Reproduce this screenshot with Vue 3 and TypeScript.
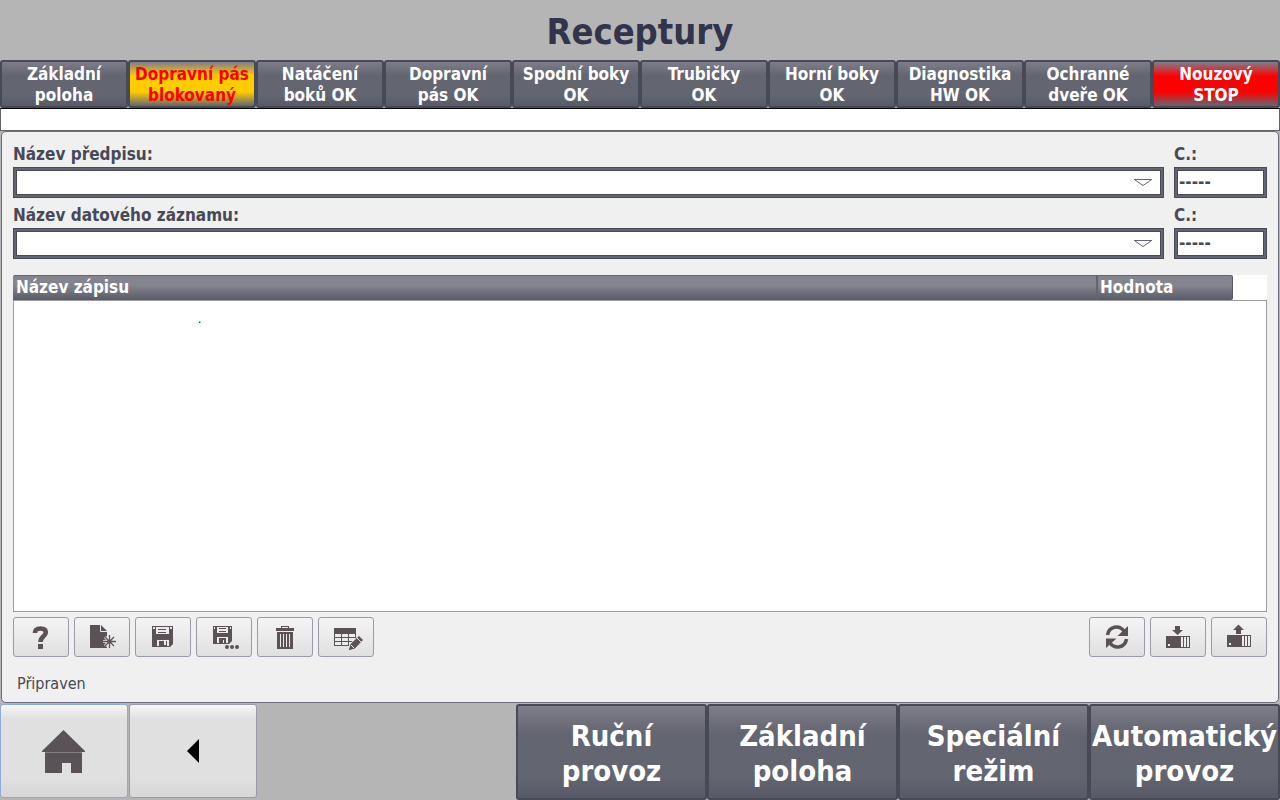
<script setup lang="ts">
interface StatusItem { lines: string[]; tone: string }
interface Field { id: string; label: string }

const statuses: StatusItem[] = [
  { lines: ['Základní', 'poloha'], tone: 'normal' },
  { lines: ['Dopravní pás', 'blokovaný'], tone: 'warning' },
  { lines: ['Natáčení', 'boků OK'], tone: 'normal' },
  { lines: ['Dopravní', 'pás OK'], tone: 'normal' },
  { lines: ['Spodní boky', 'OK'], tone: 'normal' },
  { lines: ['Trubičky', 'OK'], tone: 'normal' },
  { lines: ['Horní boky', 'OK'], tone: 'normal' },
  { lines: ['Diagnostika', 'HW OK'], tone: 'normal' },
  { lines: ['Ochranné', 'dveře OK'], tone: 'normal' },
  { lines: ['Nouzový', 'STOP'], tone: 'alarm' },
]
const fields: Field[] = [
  { id: 'recipe', label: 'Název předpisu:' },
  { id: 'record', label: 'Název datového záznamu:' },
]
const modes: string[][] = [
  ['Ruční', 'provoz'],
  ['Základní', 'poloha'],
  ['Speciální', 'režim'],
  ['Automatický', 'provoz'],
]
</script>

<template>
  <div class="screen">
    <h1 class="title">Receptury</h1>

    <nav class="statuses">
      <button v-for="(s, i) in statuses" :key="i" type="button" class="dark status" :class="s.tone">
        <span v-for="l in s.lines" :key="l">{{ l }}</span>
      </button>
    </nav>
    <div class="message-line"></div>

    <main class="panel">
      <div v-for="f in fields" :key="f.id" class="field-row">
        <div class="field">
          <label :for="f.id">{{ f.label }}</label>
          <div class="select-wrap">
            <select :id="f.id" class="box"><option></option></select>
            <svg class="arrow" viewBox="0 0 18 8"><path d="M0 .5H18M1 1L9 6.5L17 1" /></svg>
          </div>
        </div>
        <div class="field number">
          <label :for="f.id + '-number'">C.:</label>
          <input :id="f.id + '-number'" class="box" type="text" value="-----" />
        </div>
      </div>

      <div class="grid">
        <table>
          <thead>
            <tr><th class="name">Název zápisu</th><th class="value">Hodnota</th><th class="filler"></th></tr>
          </thead>
          <tbody>
            <tr><td colspan="3"><span class="entry">.</span></td></tr>
          </tbody>
        </table>
      </div>

      <div class="tools">
        <button type="button" class="light tool" aria-label="Nápověda">
          <svg viewBox="0 0 56 40"><path class="curve" d="M22 16C22 12 24.500 11.500 27.500 11.500C31 11.500 32.800 13 32.800 15.500C32.800 19.500 27.500 19 27.500 25" /><path d="M25 27h5v5h-5z" /></svg>
        </button>
        <button type="button" class="light tool" aria-label="Nový">
          <svg viewBox="0 0 56 40"><path d="M16 8H27L33 14V31H16Z" /><path class="fold" d="M26.500 8V14.500H33" /><path class="line halo" d="M35.500 18V31M29 24.500H42M31 20L40 29M40 20L31 29" /><path class="line" d="M35.500 18V31M29 24.500H42M31 20L40 29M40 20L31 29" /></svg>
        </button>
        <button type="button" class="light tool" aria-label="Uložit">
          <svg viewBox="0 0 56 40"><path d="M17 9H38V27L35 30H17Z" /><path class="cut" d="M21 10H34V17H21ZM22 23H34V29H22ZM18 10h2v2h-2zM35 10h2v2h-2z" /><path d="M23 12H31V13H23ZM23 15H31V16H23ZM24 24H32V29H24Z" /><path class="cut" d="M29 24h2v4h-2z" /></svg>
        </button>
        <button type="button" class="light tool" aria-label="Uložit jako">
          <svg viewBox="0 0 56 40"><path d="M17 9H36V24L33 27H17Z" /><path class="cut" d="M21 10H32V16H21ZM21 20H32V26H21ZM18 10h1v2h-1zM34 10h1v2h-1z" /><path d="M23 11H30V12H23ZM23 14H30V15H23ZM23 21H30V26H23Z" /><path class="cut" d="M27 23h1v3h-1z" /><circle cx="31" cy="30" r="2" /><circle cx="36" cy="30" r="2" /><circle cx="41" cy="30" r="2" /></svg>
        </button>
        <button type="button" class="light tool" aria-label="Smazat">
          <svg viewBox="0 0 56 40"><path d="M24 9H32V11H37V14H19V11H24ZM20 15H36V32H20Z" /><path class="cut" d="M25 10h6v1h-6zM23 17h1v13h-1zM26 17h1v13h-1zM29 17h1v13h-1zM32 17h1v13h-1z" /></svg>
        </button>
        <button type="button" class="light tool" aria-label="Upravit">
          <svg viewBox="0 0 56 40"><path d="M16 11H38V29H16Z" /><path class="cut" d="M17 17h6v3h-6zM24 17h6v3h-6zM31 17h6v3h-6zM17 21h6v3h-6zM24 21h6v3h-6zM31 21h6v3h-6zM17 25h6v3h-6zM24 25h6v3h-6zM31 25h8v5h-8z" /><path class="pencil" d="M30 34L32 27L41 18.500L45.500 23L37 32Z" /><path class="scratch" d="M39 21L43 25M33 28L36 31" /></svg>
        </button>
        <span class="spacer"></span>
        <button type="button" class="light tool" aria-label="Obnovit">
          <svg viewBox="0 0 56 40"><path class="curve thin" d="M18.500 18C20 9 30 7.500 35 14M37.500 22C36 31 26 32.500 21 26" /><path d="M39 9V19H28.500ZM17 31V21.500H27.500Z" /></svg>
        </button>
        <button type="button" class="light tool" aria-label="Zapsat do PLC">
          <svg viewBox="0 0 56 40"><path d="M25 9H30V13H33L27.500 18L22 13H25ZM16 19H40V31H16Z" /><path class="cut" d="M31 20h2v10h-2zM34 20h2v10h-2zM37 20h2v10h-2zM18 27h2v2h-2z" /></svg>
        </button>
        <button type="button" class="light tool" aria-label="Číst z PLC">
          <svg viewBox="0 0 56 40"><path d="M25 17H30V13H33L27.500 7.500L22 13H25ZM16 18H40V30H16Z" /><path class="cut" d="M31 19h2v10h-2zM34 19h2v10h-2zM37 19h2v10h-2zM18 26h2v2h-2z" /></svg>
        </button>
      </div>
      <p class="ready">Připraven</p>
    </main>

    <footer class="bottom">
      <button type="button" class="light nav home" aria-label="Domů">
        <svg viewBox="0 0 44 44"><path d="M21.500 1L43 22V23H0V22ZM3 24H40V44H29V34H20V44H3Z" /><path class="eave" d="M3 23H40V24H3Z" /></svg>
      </button>
      <button type="button" class="light nav" aria-label="Zpět">
        <svg class="back" viewBox="0 0 44 44"><path d="M16 22L28 10V34Z" /></svg>
      </button>
      <span class="spacer"></span>
      <button v-for="(m, i) in modes" :key="i" type="button" class="dark mode">
        <span v-for="l in m" :key="l">{{ l }}</span>
      </button>
    </footer>
  </div>
</template>

<style>
body { margin: 0; background: #b5b5b5; }
</style>

<style scoped>
* { box-sizing: border-box; }
.screen {
  min-height: 100vh;
  display: flex;
  flex-direction: column;
  background: #b5b5b5;
  color: #474956;
  font-family: Tahoma, "DejaVu Sans Condensed", "Noto Sans", sans-serif;
}
button, input, select { margin: 0; font: inherit; color: inherit; }
.title { margin: 0; height: 60px; line-height: 64px; text-align: center; font-size: 36px; color: #31344a; }
.statuses { display: grid; grid-template-columns: repeat(10, 1fr); height: 48px; }
.dark {
  display: flex;
  flex-direction: column;
  align-items: center;
  justify-content: center;
  padding: 0;
  border: 2px solid #474956;
  border-radius: 3px;
  background: linear-gradient(#7e7e8a, #636571 30%, #636571 75%, #585a67);
  color: #fff;
  font-weight: bold;
  white-space: nowrap;
}
.status { padding-top: 2px; font-size: 17px; line-height: 21px; }
.warning { background: linear-gradient(#7e7e8a, #ffcc00 32%, #ffcc00 68%, #636571); color: #f00; }
.alarm { background: linear-gradient(#7e7e8a, #f00 32%, #f00 68%, #636571); }
.message-line { height: 23px; background: #fff; border: 1px solid #636363; border-top-color: #000; }
.panel {
  flex: 1;
  display: flex;
  flex-direction: column;
  margin: 0 1px 1px;
  padding: 12px 11px 8px;
  border: 1px solid #6b6d7b;
  border-radius: 5px;
  background: #f0f0f0;
}
.field-row { display: flex; gap: 10px; height: 61px; }
.field { flex: 1; display: flex; flex-direction: column; }
.field label { height: 23px; line-height: 21px; font-size: 17px; font-weight: bold; }
.number { flex: 0 0 93px; }
.box {
  width: 100%;
  height: 31px;
  padding: 0 2px 2px;
  border: 3px solid #636571;
  border-radius: 0;
  outline: 1px solid #474956;
  outline-offset: -1px;
  background: #fff;
  box-shadow: inset 0 0 0 1px #474956;
  font-size: 17px;
  font-weight: bold;
  appearance: none;
}
.select-wrap { position: relative; }
.arrow { position: absolute; right: 12px; top: 12px; width: 18px; height: 8px; fill: none; stroke: #636571; }
.grid { flex: 1; display: flex; margin-top: 9px; }
table { width: 100%; border-collapse: separate; border-spacing: 0; table-layout: fixed; }
th {
  height: 25px;
  padding: 0 3px 2px;
  text-align: left;
  font-size: 17px;
  line-height: 22px;
  color: #fff;
  border-top: 1px solid #636571;
  background: linear-gradient(#84848e 40%, #585a67);
}
.name { border-radius: 2px 0 0 0; }
.value { width: 137px; padding-left: 2px; border-left: 2px solid #636571; border-right: 1px solid #585a67; border-radius: 0 2px 2px 0; }
.filler { width: 34px; background: #fff; border: 0; }
td { padding: 7px 0 0 184px; vertical-align: top; background: #fff; border: 1px solid #9c9aa5; color: #000; }
.entry { font-size: 12px; line-height: 16px; }
.tools { display: flex; gap: 5px; margin-top: 5px; }
.spacer { flex: 1; }
.light { padding: 0; border: 1px solid #9c9aa8; border-radius: 3px; background: linear-gradient(#f7f7f7, #e0e0e0 15%, #e0e0e0 80%, #d8d6d8); }
.tool { width: 56px; height: 40px; background: linear-gradient(#f4f4f4, #e0e0e0); }
.tool svg { display: block; width: 56px; height: 40px; margin: -1px; }
svg { fill: #5a5257; }
.cut { fill: #ebebeb; }
.curve { fill: none; stroke: #5a5257; stroke-width: 4.6; }
.thin { stroke-width: 3.6; }
.line { stroke: #5a5257; stroke-width: 1.3; }
.halo { stroke: #ebebeb; stroke-width: 3; }
.fold { fill: none; stroke: #ebebeb; }
.pencil { stroke: #ebebeb; }
.scratch { stroke: #ebebeb; }
.ready { margin: 16px 4px 0; font-size: 16px; line-height: 21px; }
.bottom { display: flex; height: 96px; }
.nav { width: 128px; height: 94px; display: flex; align-items: center; justify-content: center; margin-right: 1px; }
.nav svg { width: 44px; height: 44px; }
.home { border-color: #8cabd8; }
.eave { fill: #857f83; }
.nav .back { fill: #000; }
.mode { flex: 0 1 191px; padding-top: 3px; font-size: 29px; line-height: 35px; }
</style>
